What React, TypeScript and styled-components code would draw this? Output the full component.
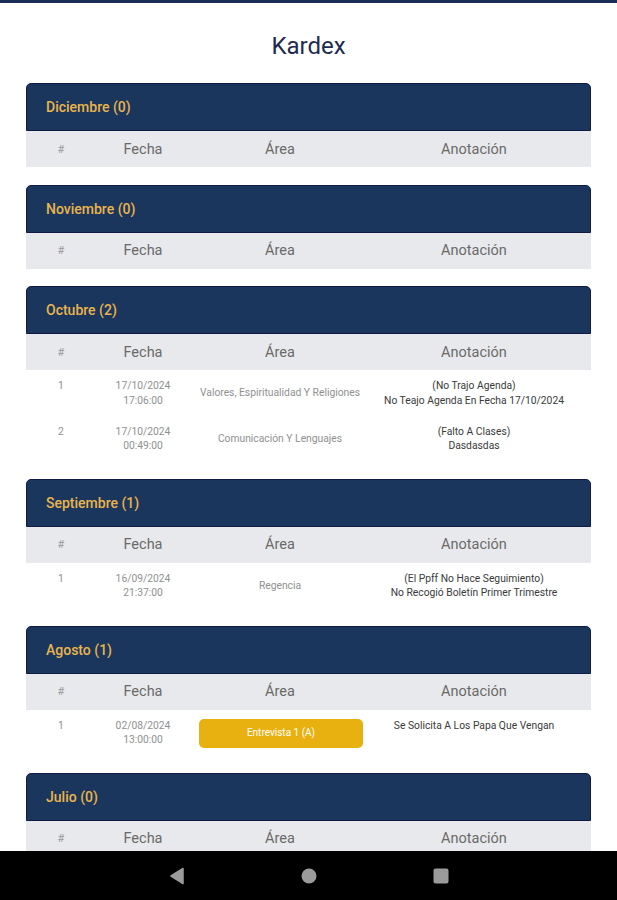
import React from "react";
import styled, { createGlobalStyle } from "styled-components";

const GlobalStyle = createGlobalStyle`
  html, body { margin: 0; padding: 0; background: #ffffff; }
  body { font-family: Roboto, "Noto Sans", Arial, sans-serif; }
  * { box-sizing: border-box; }
`;

const TopBar = styled.div`
  height: 3px;
  background: #1b2d55;
`;

const Page = styled.main`
  padding: 0 26px 60px;
`;

const Title = styled.h1`
  margin: 29px 0 23px;
  text-align: center;
  font-size: 24px;
  line-height: 28px;
  font-weight: 400;
  color: #1e2a52;
`;

const Card = styled.section`
  margin-bottom: 17.5px;
`;

const CardHeader = styled.div`
  height: 48px;
  display: flex;
  align-items: center;
  padding-left: 19px;
  background: #1b365d;
  border: 1px solid #0f1a45;
  border-radius: 5px 5px 0 0;
  color: #e9b44c;
  font-size: 14px;
  font-weight: 500;
`;

const Grid = styled.div`
  display: grid;
  grid-template-columns: 70px 94px 180px 208px 1fr;
`;

const HeadRow = styled(Grid)`
  height: 36px;
  align-items: center;
  background: #e8e9ec;
`;

const HeadCell = styled.div<{ $faint?: boolean }>`
  text-align: center;
  color: ${(p) => (p.$faint ? "#9a9a9a" : "#6a6a6a")};
  font-size: ${(p) => (p.$faint ? "11px" : "14.5px")};
`;

const Row = styled(Grid)`
  height: 45.5px;
  padding-top: 9px;
  padding-bottom: 8px;
  align-items: start;
  font-size: 10.3px;
  line-height: 14.5px;
`;

const Cell = styled.div<{ $dark?: boolean; $center?: boolean }>`
  text-align: center;
  color: ${(p) => (p.$dark ? "#3a3a3a" : "#909090")};
  align-self: ${(p) => (p.$center ? "center" : "start")};
  white-space: nowrap;
`;

const AreaButton = styled.div`
  margin: 0 7px 0 9px;
  height: 29px;
  border-radius: 5px;
  background: #e9b10f;
  color: #ffffff;
  display: flex;
  align-items: center;
  justify-content: center;
  font-size: 10px;
`;

const NavBar = styled.nav`
  position: fixed;
  left: 0;
  right: 0;
  bottom: 0;
  height: 49px;
  background: #000000;
  display: flex;
  align-items: center;
  justify-content: center;
`;

const NavSlot = styled.div`
  width: 132px;
  display: flex;
  justify-content: center;
`;

type Entry = {
  n: number;
  date: string;
  time: string;
  area: string;
  areaButton?: boolean;
  note: string[];
};

type Month = { name: string; entries: Entry[] };

const months: Month[] = [
  { name: "Diciembre", entries: [] },
  { name: "Noviembre", entries: [] },
  {
    name: "Octubre",
    entries: [
      {
        n: 1,
        date: "17/10/2024",
        time: "17:06:00",
        area: "Valores, Espiritualidad Y Religiones",
        note: ["(No Trajo Agenda)", "No Teajo Agenda En Fecha 17/10/2024"],
      },
      {
        n: 2,
        date: "17/10/2024",
        time: "00:49:00",
        area: "Comunicación Y Lenguajes",
        note: ["(Falto A Clases)", "Dasdasdas"],
      },
    ],
  },
  {
    name: "Septiembre",
    entries: [
      {
        n: 1,
        date: "16/09/2024",
        time: "21:37:00",
        area: "Regencia",
        note: ["(El Ppff No Hace Seguimiento)", "No Recogió Boletín Primer Trimestre"],
      },
    ],
  },
  {
    name: "Agosto",
    entries: [
      {
        n: 1,
        date: "02/08/2024",
        time: "13:00:00",
        area: "Entrevista 1 (A)",
        areaButton: true,
        note: ["Se Solicita A Los Papa Que Vengan"],
      },
    ],
  },
  { name: "Julio", entries: [] },
];

export default function App() {
  return (
    <>
      <GlobalStyle />
      <TopBar />
      <Page>
        <Title>Kardex</Title>
        {months.map((m) => (
          <Card key={m.name}>
            <CardHeader>
              {m.name} ({m.entries.length})
            </CardHeader>
            <HeadRow>
              <HeadCell $faint>#</HeadCell>
              <HeadCell>Fecha</HeadCell>
              <HeadCell>Área</HeadCell>
              <HeadCell>Anotación</HeadCell>
            </HeadRow>
            {m.entries.map((e) => (
              <Row key={e.n}>
                <Cell>{e.n}</Cell>
                <Cell>
                  {e.date}
                  <br />
                  {e.time}
                </Cell>
                <Cell $center>
                  {e.areaButton ? <AreaButton>{e.area}</AreaButton> : e.area}
                </Cell>
                <Cell $dark>
                  {e.note.map((l, i) => (
                    <div key={i}>{l}</div>
                  ))}
                </Cell>
              </Row>
            ))}
          </Card>
        ))}
      </Page>
      <NavBar>
        <NavSlot>
          <svg width="16" height="18" viewBox="0 0 16 18">
            <path d="M14 1.5 L2 9 L14 16.5 Z" fill="#9b9b9b" stroke="#9b9b9b" strokeWidth="1.5" strokeLinejoin="round" />
          </svg>
        </NavSlot>
        <NavSlot>
          <svg width="16" height="16" viewBox="0 0 16 16">
            <circle cx="8" cy="8" r="7.5" fill="#9b9b9b" />
          </svg>
        </NavSlot>
        <NavSlot>
          <svg width="16" height="16" viewBox="0 0 16 16">
            <rect x="0.5" y="0.5" width="15" height="15" rx="2" fill="#9b9b9b" />
          </svg>
        </NavSlot>
      </NavBar>
    </>
  );
}
